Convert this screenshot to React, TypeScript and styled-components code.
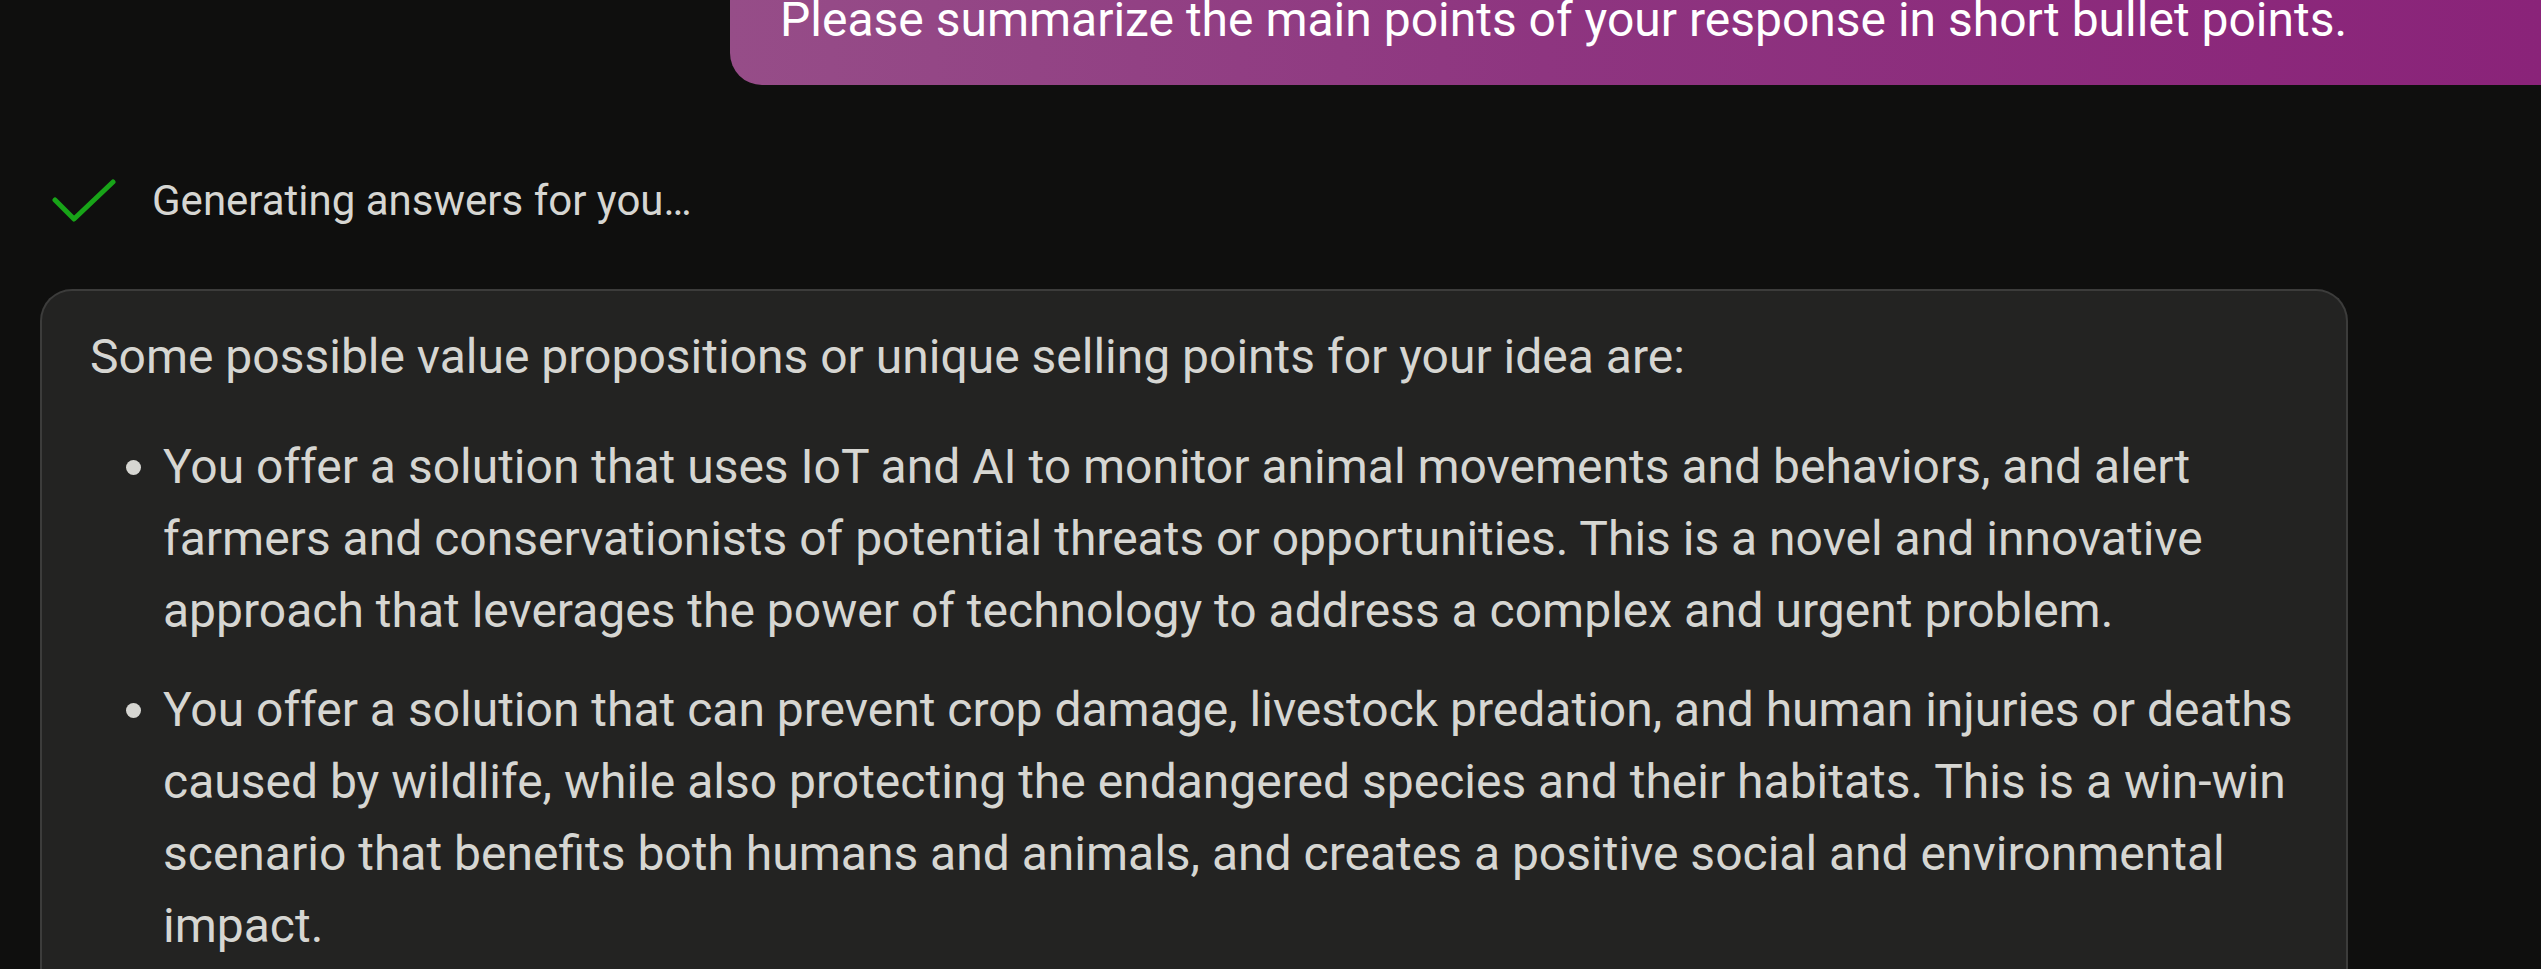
import React from "react";
import styled, { createGlobalStyle } from "styled-components";

const GlobalStyle = createGlobalStyle`
  html, body {
    margin: 0;
    padding: 0;
    background: #0f0f0e;
  }
  body {
    font-family: Roboto, "Liberation Sans", Arial, sans-serif;
    overflow: hidden;
  }
`;

const Page = styled.div`
  width: 2541px;
  height: 969px;
  overflow: hidden;
  background: #0f0f0e;
  display: flex;
  flex-direction: column;
`;

const UserRow = styled.div`
  display: flex;
  justify-content: flex-end;
  margin-top: -40px;
`;

const UserBubble = styled.div`
  margin-left: 730px;
  flex: 1;
  padding: 32px 48px 37px 50px;
  background: linear-gradient(90deg, #964d88 0%, #8e3580 45%, #8a2379 100%);
  border-radius: 32px 0 0 32px;
  color: #ffffff;
  font-size: 48px;
  line-height: 56px;
  white-space: nowrap;
`;

const StatusRow = styled.div`
  display: flex;
  align-items: center;
  gap: 36px;
  margin-top: 93px;
  padding-left: 50px;
  height: 46px;
`;

const StatusText = styled.span`
  color: #d6d6d2;
  font-size: 42px;
  line-height: 46px;
`;

const Card = styled.div`
  margin: 65px 0 0 40px;
  width: 2308px;
  box-sizing: border-box;
  flex: 1;
  background: #232322;
  border: 2px solid #3c3c3b;
  border-bottom: none;
  border-radius: 32px 32px 0 0;
  padding: 30px 48px 0 48px;
  color: #d6d6d2;
  font-size: 48px;
  line-height: 72px;
`;

const Para = styled.p`
  margin: 0 0 38px 0;
`;

const List = styled.ul`
  margin: 0;
  padding: 0;
  list-style: none;
  display: flex;
  flex-direction: column;
  gap: 27px;
`;

const Item = styled.li`
  position: relative;
  padding-left: 73px;

  &::before {
    content: "";
    position: absolute;
    left: 36px;
    top: 29px;
    width: 15px;
    height: 15px;
    border-radius: 50%;
    background: #d6d6d2;
  }
`;

const Check = () => (
  <svg width="66" height="46" viewBox="0 0 66 46" fill="none">
    <path
      d="M5 22 L24 41 L63 4"
      stroke="#18a418"
      strokeWidth="5"
      strokeLinecap="round"
      strokeLinejoin="round"
    />
  </svg>
);

export default function App() {
  return (
    <>
      <GlobalStyle />
      <Page>
        <UserRow>
          <UserBubble>
            Please summarize the main points of your response in short bullet points.
          </UserBubble>
        </UserRow>
        <StatusRow>
          <Check />
          <StatusText>Generating answers for you…</StatusText>
        </StatusRow>
        <Card>
          <Para>Some possible value propositions or unique selling points for your idea are:</Para>
          <List>
            <Item>
              You offer a solution that uses IoT and AI to monitor animal movements and behaviors, and alert
              farmers and conservationists of potential threats or opportunities. This is a novel and innovative
              approach that leverages the power of technology to address a complex and urgent problem.
            </Item>
            <Item>
              You offer a solution that can prevent crop damage, livestock predation, and human injuries or deaths
              caused by wildlife, while also protecting the endangered species and their habitats. This is a win-win
              scenario that benefits both humans and animals, and creates a positive social and environmental
              impact.
            </Item>
          </List>
        </Card>
      </Page>
    </>
  );
}
